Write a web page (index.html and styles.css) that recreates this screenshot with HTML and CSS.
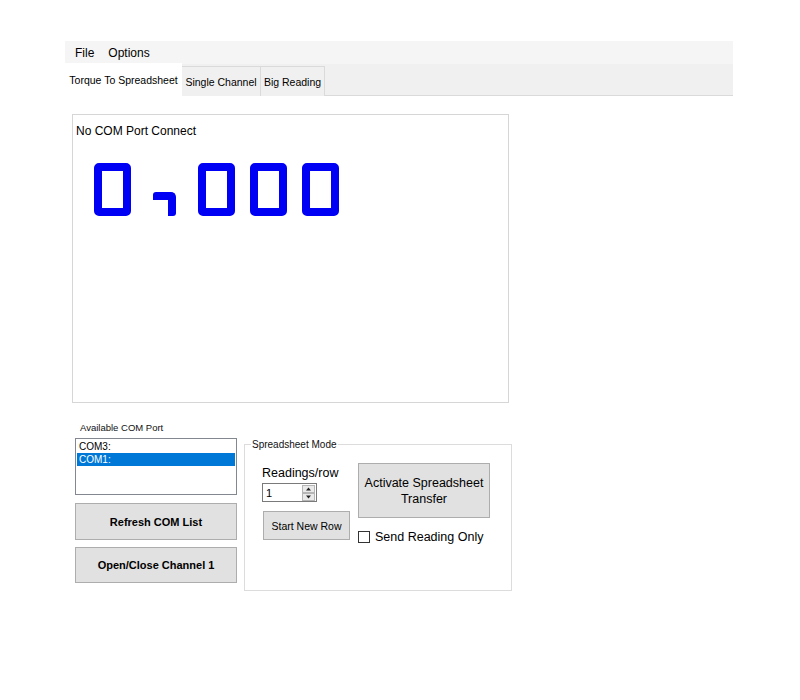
FILE: index.html
```html
<!DOCTYPE html>
<html>
<head>
<meta charset="utf-8">
<link rel="stylesheet" href="styles.css">
</head>
<body>
<div class="app">
  <div class="menubar">
    <span class="menu-item first">File</span>
    <span class="menu-item">Options</span>
  </div>
  <div class="tabstrip">
    <div class="tab active">Torque To Spreadsheet</div>
    <div class="tab t-single">Single Channel</div>
    <div class="tab t-big">Big Reading</div>
  </div>
  <div class="page">
    <div class="display">
      <div class="status">No COM Port Connect</div>
      <div class="digits">
        <div class="seg-zero"></div>
        <div class="seg-comma"></div>
        <div class="seg-zero"></div>
        <div class="seg-zero"></div>
        <div class="seg-zero"></div>
      </div>
    </div>
    <div class="lower">
      <div class="com-col">
        <div class="com-label">Available COM Port</div>
        <div class="listbox">
          <div class="list-item">COM3:</div>
          <div class="list-item selected">COM1:</div>
        </div>
        <button class="btn btn-bold btn-refresh">Refresh COM List</button>
        <button class="btn btn-bold btn-open">Open/Close Channel 1</button>
      </div>
      <fieldset class="group">
        <legend class="group-legend">Spreadsheet Mode</legend>
        <div class="group-body">
          <div class="left-col">
            <div class="readings-label">Readings/row</div>
            <div class="spinbox">
              <span class="spin-value">1</span>
              <span class="spin-buttons">
                <svg width="13" height="16" viewBox="0 0 13 16">
                  <rect x="0.5" y="0.5" width="12" height="7" fill="#e9e9e9" stroke="#b5b5b5"/>
                  <rect x="0.5" y="8.5" width="12" height="7" fill="#e9e9e9" stroke="#b5b5b5"/>
                  <path d="M6.5 2.5 L9 5.5 L4 5.5 Z" fill="#222"/>
                  <path d="M4 10.5 L9 10.5 L6.5 13.5 Z" fill="#222"/>
                </svg>
              </span>
            </div>
            <button class="btn btn-newrow">Start New Row</button>
          </div>
          <div class="right-col">
            <button class="btn btn-activate">Activate Spreadsheet<br>Transfer</button>
            <label class="check-row">
              <span class="checkbox"></span>
              <span class="check-text">Send Reading Only</span>
            </label>
          </div>
        </div>
      </fieldset>
    </div>
  </div>
</div>
</body>
</html>
```
FILE: styles.css
```css
html, body {
  margin: 0;
  padding: 0;
  background: #ffffff;
}
body {
  font-family: "Liberation Sans", Arial, sans-serif;
  color: #000;
}
.app {
  margin: 41px 0 0 65px;
  width: 668px;
}
.menubar {
  height: 23px;
  background: #f5f5f5;
  display: flex;
  align-items: center;
  font-size: 12px;
}
.menu-item {
  padding: 0 7px;
}
.menu-item.first {
  margin-left: 3px;
}
.tabstrip {
  height: 31px;
  background: #f0f0f0;
  border-bottom: 1px solid #dadada;
  display: flex;
  align-items: flex-end;
  font-size: 10.5px;
}
.tab {
  height: 30px;
  box-sizing: border-box;
  display: flex;
  align-items: center;
  justify-content: center;
  border: 1px solid #dadada;
  border-bottom: none;
  border-left: none;
  background: #f0f0f0;
  margin-bottom: -1px;
}
.tab.active {
  width: 117px;
  height: 33px;
  background: #ffffff;
  border: none;
  padding-top: 1px;
}
.tab.t-single {
  width: 79px;
}
.tab.t-big {
  width: 64px;
}
.page {
  padding-top: 18px;
  padding-bottom: 40px;
}
.display {
  margin-left: 7px;
  width: 437px;
  height: 289px;
  box-sizing: border-box;
  border: 1px solid #d6d6d6;
  padding: 9px 0 0 3px;
}
.status {
  font-size: 12px;
  line-height: 14px;
}
.digits {
  display: flex;
  align-items: flex-end;
  margin: 25px 0 0 18px;
}
.seg-zero {
  width: 37px;
  height: 53px;
  box-sizing: border-box;
  border: 8px solid #0000f5;
  border-radius: 5px;
  margin-right: 15px;
}
.seg-comma {
  width: 23px;
  height: 24px;
  box-sizing: border-box;
  border-top: 8px solid #0000f5;
  border-right: 8px solid #0000f5;
  border-radius: 3px 5px 3px 0;
  margin-right: 22px;
  margin-left: 7px;
}
.lower {
  display: flex;
  align-items: flex-start;
  margin-top: 18px;
}
.com-col {
  margin-left: 10px;
  width: 162px;
  display: flex;
  flex-direction: column;
}
.com-label {
  font-size: 9.5px;
  line-height: 13px;
  padding-left: 5px;
  color: #111;
}
.listbox {
  margin-top: 4px;
  height: 57px;
  box-sizing: border-box;
  border: 1px solid #828790;
  padding: 1px 1px 0 1px;
  font-size: 10px;
}
.list-item {
  height: 13px;
  line-height: 13px;
  padding-left: 2px;
}
.list-item.selected {
  background: #0078d7;
  color: #ffffff;
}
.btn {
  font-family: "Liberation Sans", Arial, sans-serif;
  background: #e1e1e1;
  border: 1px solid #adadad;
  color: #000;
  padding: 0;
  margin: 0;
  box-sizing: border-box;
}
.btn-bold {
  font-weight: bold;
  font-size: 11px;
}
.btn-refresh {
  margin-top: 8px;
  height: 37px;
}
.btn-open {
  margin-top: 7px;
  height: 36px;
}
.group {
  margin: 17px 0 0 7px;
  padding: 0;
  width: 268px;
  height: 153px;
  box-sizing: border-box;
  border: 1px solid #dcdcdc;
  min-width: 0;
}
.group-legend {
  font-size: 10px;
  line-height: 13px;
  padding: 0 1px;
  margin-left: 6px;
  color: #111;
}
.group-body {
  display: flex;
  padding: 12px 0 0 17px;
  gap: 8px;
}
.left-col {
  width: 88px;
  display: flex;
  flex-direction: column;
  align-items: flex-start;
}
.readings-label {
  font-size: 12.5px;
  line-height: 15px;
  margin-top: 3px;
}
.spinbox {
  margin-top: 2px;
  width: 55px;
  height: 19px;
  box-sizing: border-box;
  border: 1px solid #7a7a7a;
  display: flex;
  align-items: center;
  justify-content: space-between;
  font-size: 11px;
  background: #fff;
}
.spin-value {
  padding-left: 3px;
}
.spin-buttons {
  display: flex;
  padding-right: 1px;
}
.btn-newrow {
  margin-top: 9px;
  margin-left: 1px;
  width: 87px;
  height: 29px;
  font-size: 10.5px;
}
.right-col {
  display: flex;
  flex-direction: column;
}
.btn-activate {
  width: 132px;
  height: 55px;
  font-size: 12.5px;
  line-height: 16px;
}
.check-row {
  display: flex;
  align-items: center;
  margin-top: 12px;
  gap: 5px;
}
.checkbox {
  width: 12px;
  height: 12px;
  box-sizing: border-box;
  border: 1px solid #333;
  background: #fff;
}
.check-text {
  font-size: 12.5px;
  line-height: 14px;
}
```
